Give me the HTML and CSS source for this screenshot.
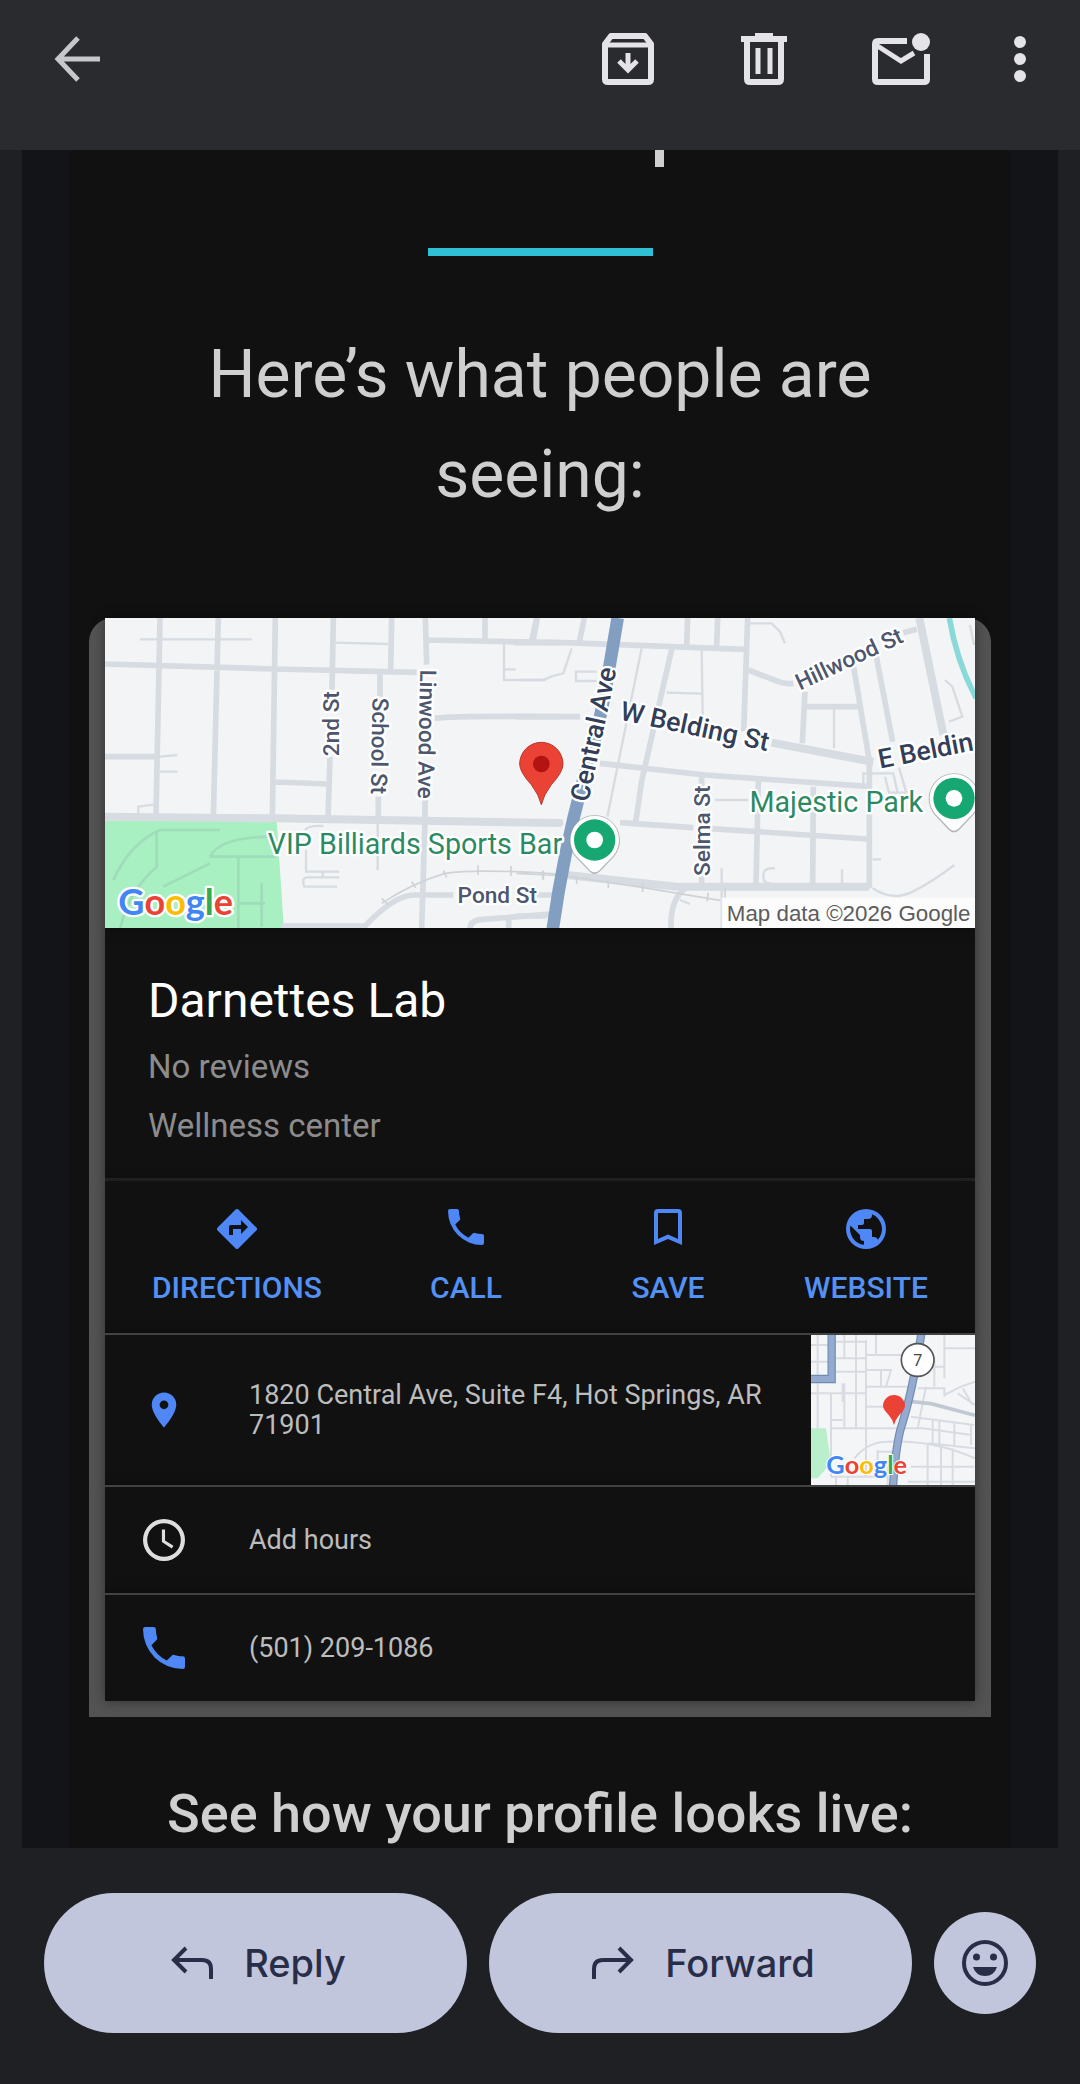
FILE: index.html
```html
<!DOCTYPE html>
<html lang="en">
<head>
  <meta charset="UTF-8" />
  <meta name="viewport" content="width=device-width, initial-scale=1.0" />
  <title>Darnettes Lab</title>
  <link rel="stylesheet" href="styles.css">
</head>
<body>
  <header class="toolbar">
    <button class="icon-btn back" aria-label="Back">
      <svg width="46" height="46" viewBox="0 0 46 46" fill="none" stroke="#c6c7cb" stroke-width="5"><path d="M24 2L4 23l20 21M4 23h42" /></svg>
    </button>
    <button class="icon-btn archive" aria-label="Archive">
      <svg width="52" height="52" viewBox="0 0 52 52" fill="none" stroke="#e3e3e8" stroke-width="5"><path d="M3 11l6-8h34l6 8v35q0 3-3 3H6q-3 0-3-3z" stroke-linejoin="round" stroke-width="6" /><path d="M3 12h46" /><path d="M26 20v16M17 28l9 9 9-9" /></svg>
    </button>
    <button class="icon-btn trash" aria-label="Delete">
      <svg width="46" height="52" viewBox="0 0 46 52" fill="none" stroke="#e3e3e8" stroke-width="6"><path d="M0 6h46M14 3h18" /><path d="M6 6v40q0 3 3 3h28q3 0 3-3V6" /><path d="M17 15v26M29 15v26" stroke-width="5" /></svg>
    </button>
    <button class="icon-btn unread" aria-label="Mark as unread">
      <svg width="58" height="52" viewBox="0 0 58 52" fill="none" stroke="#e3e3e8" stroke-width="5"><path d="M35 8H6Q3 8 3 11v35q0 3 3 3h46q3 0 3-3V21" stroke-width="6" /><path d="M4 12l25 16 13-8" /><circle cx="49" cy="9" r="9" fill="#e3e3e8" stroke="none" /></svg>
    </button>
    <button class="icon-btn" aria-label="More options">
      <svg width="12" height="46" viewBox="0 0 12 46" fill="#e3e3e8"><circle cx="6" cy="6" r="6" /><circle cx="6" cy="23" r="6" /><circle cx="6" cy="40" r="6" /></svg>
    </button>
  </header>

  <main class="message">
    <div class="content">
      <div class="cut-line"></div>
      <hr class="accent">
      <h1>Here’s what people are seeing:</h1>

      <section class="card">
        <svg class="map" viewBox="0 0 2610 930" role="img" aria-label="Map of Central Ave">
          <rect width="2610" height="930" fill="#f3f4f5" />
          <!-- west side -->
          <g transform="translate(-75 -54)">
            <path d="M75 662h515l22 330H75z" fill="#a8efc1" />
            <g class="path-line"><path d="M100 840q50-110 140-150h180M230 690v110q-90 80-110 190M390 770q30-60 190-60M390 770h200M250 860q80-40 140-70M475 770v215M475 910h80M545 850v130" /></g>
            <g class="minor"><path d="M180 118h335M240 470l52-5M240 515h52M175 640v-20l45-6M765 128l160 4M1272 130v110h125M1272 208h35M893 660v150M675 690q10-15 55-12M678 750v65h100M728 815v20M778 832h-95q-20 0-10 28h98" /></g>
            <g class="road"><path d="M240 54L228 645M415 54L400 650M586 54L577 655M760 54l-4 215M750 470l-6 185M935 54l-3 160M900 215v75M895 590v70M1036 54l4 140M1035 600v60l-10 325M75 192l510 15 425 10M75 470h160M585 546l160 6M1040 120l400 8M1215 54v70M1370 54l-15 70M1065 355q60-8 375-5M605 978h250q90-95 150-93h115M1170 985q0-25 40-27l230-18M1286 960v25" /></g>
            <path class="wide" d="M75 650l510 5 860 14" />
            <path class="rail" d="M905 910q90-60 190-90 100-15 350 3M905 895l20 20M995 845l12 18M1090 812l10 20M1194 795v30M1293 798v30M1388 812v24" />
          </g>
          <!-- east side -->
          <g transform="translate(1245 -54)">
            <g class="minor"><path d="M155 145l-25 75q-30 5-60 20H-10M230 215h-62v28h62M365 145L262 650M545 148l3 200M440 278l105 3M690 70h65l25 25 15 35M942 325v120M1030 550v-30h90l12 55M1095 530l12 48h52l-22-75M1275 240l22 20 30 90-40 15M1350 75l12 60M585 600h100M765 805q-38-3-35 25 0 20 22 20M966 808v46M1058 865q60 40 120 10t125-80M1058 778h25M605 805v180M480 900l30 12" /></g>
            <g class="road"><path d="M-20 128h155l540 20M52 54L38 128M193 54l-15 72M503 54l-3 80M593 54l-3 85M683 54l-12 340M455 148l-90 395-18 125M685 210l90 35q20 8 45 5M240 490l315 35 500 35M-10 350h190M855 275l-8 155M850 320h175M1000 195l50 300M1068 165l50 260M1150 98l40-10M1048 495v370M545 525v40M545 820v35M715 545l-7 310M880 560l-2 295M560 685l480 32M-10 668h140M300 668l220 15M495 865q-45 35-42 120M50 885h50M-10 948h90" /></g>
            <g class="wide"><path d="M755 428l305 58M1198 54l72 350M140 825l330 35h578" /></g>
            <path class="rail" d="M-10 820l150 8 230 35 230 38M70 812v28M170 832v20M265 840v24M368 850v26M565 878l-4 26M615 865v28" />
            <path d="M1288 54q22 130 80 240" fill="none" stroke="#8ad9d9" stroke-width="17" />
            <path class="highway" d="M293 54l-38 225q-20 110-65 260-60 220-92 450" />
          </g>
          <g class="street">
            <text transform="translate(702 317) rotate(-90)">2nd St</text>
            <text transform="translate(800 383) rotate(91)">School St</text>
            <text transform="translate(942 348) rotate(91)">Linwood Ave</text>
            <text x="1177" y="855">Pond St</text>
            <text transform="translate(1815 638) rotate(-90)">Selma St</text>
            <text transform="translate(2242 144) rotate(-25)">Hillwood St</text>
          </g>
          <g class="avenue">
            <text transform="translate(1492 354) rotate(-78)">Central Ave</text>
            <text transform="translate(1764 352) rotate(12)">W Belding St</text>
            <text transform="translate(2467 424) rotate(-11)">E Beldin</text>
          </g>
          <g class="place">
            <text x="930" y="708">VIP Billiards Sports Bar</text>
            <text x="2194" y="583">Majestic Park</text>
          </g>
          <g transform="translate(1309 438)">
            <path d="M0 122q-6-28-30-60-35-38-35-62a65 65 0 01130 0q0 24-35 62Q6 94 0 122z" fill="#ea4335" stroke="#b9352a" stroke-width="3" />
            <circle r="25" fill="#b31412" />
          </g>
          <g id="pin" transform="translate(1469 666)">
            <path d="M0 102q-10 0-22-14l-36-38a76 76 0 11116 0l-36 38Q10 102 0 102z" fill="#8b8f94" opacity=".6" />
            <path d="M0 97q-10 0-20-13l-36-37a73 73 0 11112 0l-36 37Q10 97 0 97z" fill="#fff" />
            <circle r="62" fill="#17a773" />
            <circle r="25" fill="#fff" />
          </g>
          <use href="#pin" x="1078" y="-125" />
          <rect x="1850" y="839" width="760" height="91" fill="#fff" opacity=".75" />
          <text class="credit" x="2231" y="909">Map data ©2026 Google</text>
          <text class="google" x="40" y="892"><tspan class="blue">G</tspan><tspan class="red">o</tspan><tspan class="yellow">o</tspan><tspan class="blue">g</tspan><tspan class="green">l</tspan><tspan class="red">e</tspan></text>
        </svg>

        <div class="summary">
          <h2>Darnettes Lab</h2>
          <p>No reviews</p>
          <p>Wellness center</p>
        </div>

        <nav class="actions">
          <a href="#">
            <svg viewBox="2 2 20 20"><path d="M21.7 11.3l-9-9a1 1 0 00-1.4 0l-9 9a1 1 0 000 1.4l9 9a1 1 0 001.4 0l9-9a1 1 0 000-1.4zM14 14.5V12h-4v3H8v-4a1 1 0 011-1h5V7.500l3.500 3.500z" /></svg>
            <span>DIRECTIONS</span>
          </a>
          <a href="#">
            <svg viewBox="2 3 20 20"><path d="M6.600 10.800a15.100 15.100 0 006.600 6.600l2.200-2.200a1 1 0 011-.25c1.100.37 2.300.57 3.600.57a1 1 0 011 1V20a1 1 0 01-1 1A17 17 0 013 4a1 1 0 011-1h3.500a1 1 0 011 1c0 1.250.2 2.450.57 3.570a1 1 0 01-.25 1.020z" /></svg>
            <span>CALL</span>
          </a>
          <a href="#">
            <svg viewBox="2 3 20 20"><path d="M17 3H7a2 2 0 00-2 2v16l7-3 7 3V5a2 2 0 00-2-2zm0 15l-5-2.200L7 18V5h10z" /></svg>
            <span>SAVE</span>
          </a>
          <a href="#">
            <svg viewBox="2 2 20 20"><path d="M12 2a10 10 0 100 20 10 10 0 000-20zm-1 17.930A8 8 0 014.210 10.210L9 15v1a2 2 0 002 2zm6.900-2.540A2 2 0 0016 16h-1v-3a1 1 0 00-1-1H8v-2h2a1 1 0 001-1V7h2a2 2 0 002-2v-.41a8 8 0 012.900 12.800z" /></svg>
            <span>WEBSITE</span>
          </a>
        </nav>

        <div class="row address">
          <svg class="row-icon" viewBox="0 0 24 24"><path d="M12 2a7 7 0 00-7 7c0 5.250 7 13 7 13s7-7.750 7-13a7 7 0 00-7-7zm0 9.500a2.500 2.500 0 110-5 2.500 2.500 0 010 5z" /></svg>
          <p>1820 Central Ave, Suite F4, Hot Springs, AR 71901</p>
          <svg class="thumb" viewBox="0 0 492 450" role="img" aria-label="Area map">
            <rect width="492" height="450" fill="#f4f5f7" />
            <path d="M0 280h45l15 105-40 45H0z" fill="#b9efcb" />
            <g class="thumb-road">
              <path d="M20 0v280M100 0v70M100 145v135M135 0v280M165 15v260M0 30h70M70 20h95M0 80h50M70 70h95M70 110h95M0 175h165M60 175v250M165 100v325M60 255h35M95 145v55M195 0v60M165 60h110M165 105h75l-15 50M210 105v50M165 155h145M165 215h60M60 280h280M400 0v130M370 65v90M340 95h60M400 40h92M320 160h80v25M345 155l-25 125M400 180l50-25 42-15M440 175l52 35M455 160l30 50M300 245l190 25M335 280l147 20M385 255v75M430 260v70M365 255v75M480 270v60M350 325l142 15M130 370q40-50 100-50 140-5 262 50M300 395h190M350 330v120M390 335v115M425 340v110M290 440h202M60 425h170M200 345v40h45v-35h-45M75 425v25M110 425v25M230 395v55" />
              <path class="heavy" d="M285 198l75 8 132 35" />
            </g>
            <g fill="none" stroke="#6f8bb3" stroke-width="25"><path d="M62 0v132H0" /><path d="M331-4Q305 170 268 285q-15 60-22 170" /></g>
            <g fill="none" stroke="#94abcf" stroke-width="18"><path d="M62 0v132H0" /><path d="M331-4Q305 170 268 285q-15 60-22 170" /></g>
            <circle cx="320" cy="75" r="49" fill="#fff" stroke="#555" stroke-width="5" />
            <text class="route" x="320" y="92">7</text>
            <path d="M249 270q-3-15-16-30-17-18-17-27a33 33 0 0166 0q0 9-17 27-13 15-16 30z" fill="#ea4335" />
            <text class="google small" x="46" y="416"><tspan class="blue">G</tspan><tspan class="red">o</tspan><tspan class="yellow">o</tspan><tspan class="blue">g</tspan><tspan class="green">l</tspan><tspan class="red">e</tspan></text>
          </svg>
        </div>
        <div class="row">
          <svg class="row-icon light" viewBox="2 2 20 20"><path d="M12 2a10 10 0 100 20 10 10 0 000-20zm0 18a8 8 0 110-16 8 8 0 010 16z" /><path d="M12.500 7H11v6l4.700 3 .8-1.300-4-2.500z" /></svg>
          <p>Add hours</p>
        </div>
        <div class="row">
          <svg class="row-icon" viewBox="3 3 18 18"><path d="M6.600 10.800a15.100 15.100 0 006.600 6.600l2.200-2.200a1 1 0 011-.25c1.100.37 2.300.57 3.600.57a1 1 0 011 1V20a1 1 0 01-1 1A17 17 0 013 4a1 1 0 011-1h3.500a1 1 0 011 1c0 1.250.2 2.450.57 3.570a1 1 0 01-.25 1.020z" /></svg>
          <p>(501) 209-1086</p>
        </div>
      </section>

      <h3>See how your profile looks live:</h3>
    </div>
  </main>

  <footer class="reply-bar">
    <button class="pill">
      <svg width="42" height="34" viewBox="0 0 42 34" fill="none" stroke="#292e48" stroke-width="4"><path d="M15 2L3 14l12 12M3 14h28q9 0 9 9v10" /></svg>
      Reply
    </button>
    <button class="pill">
      <svg width="42" height="34" viewBox="0 0 42 34" fill="none" stroke="#292e48" stroke-width="4"><path d="M27 2l12 12-12 12M39 14H11q-9 0-9 9v10" /></svg>
      Forward
    </button>
    <button class="emoji" aria-label="Add reaction">
      <svg width="48" height="48" viewBox="0 0 48 48" fill="#292e48"><circle cx="24" cy="24" r="21" fill="none" stroke="#292e48" stroke-width="4" /><circle cx="15.500" cy="18" r="3.500" /><circle cx="32.500" cy="18" r="3.500" /><path d="M12 28h24q-3 9-12 9t-12-9z" /></svg>
    </button>
  </footer>
</body>
</html>
```
FILE: styles.css
```css
* { box-sizing: border-box; }
body {
  margin: 0; min-height: 100vh; display: flex; flex-direction: column;
  background: #1e2024; color: #cfcfcf; font-family: Roboto, Arial, sans-serif;
}
h1, h2, h3, p { margin: 0; font-weight: 400; }
button { border: none; padding: 0; font-family: inherit; cursor: pointer; }
svg { display: block; flex-shrink: 0; }

.toolbar {
  display: flex; align-items: center; height: 150px;
  padding: 0 54px 32px; background: #2a2b2f;
}
.icon-btn { background: none; }
.back { margin-right: auto; }
.archive { margin-right: 87px; }
.trash { margin-right: 85px; }
.unread { margin-right: 84px; }

.message { margin: 0 22px; padding: 0 48px; background: #121418; }
.content { padding: 0 19px; background: #111; overflow: hidden; }
.cut-line { width: 9px; height: 17px; margin: 0 auto; transform: translateX(119px); background: #cfcfcf; }
.accent { width: 225px; height: 8px; margin: 81px auto 0; border: none; background: #2fc0d5; }
h1 {
  max-width: 720px; margin: 69px auto 0; text-align: center;
  font-size: 66px; line-height: 100px;
}
h3 {
  margin: 63px 0 0; text-align: center;
  font-size: 54px; font-weight: 500; line-height: 68px;
}

.card {
  margin-top: 93px; padding: 0 16px 16px;
  background: #535353; border-radius: 24px 24px 0 0;
}
.card > * { background: #111; box-shadow: 0 0 12px rgba(0, 0, 0, 0.4); }
.map { position: relative; width: 100%; height: auto; overflow: hidden; }
.summary {
  padding: 43px 43px 23px; border-bottom: 3px solid #262626;
}
.summary h2 { font-size: 48px; line-height: 60px; color: #fff; margin-bottom: 6px; }
.summary p { font-size: 33px; line-height: 59px; color: #8c8c8c; }

.actions {
  display: grid; grid-template-columns: 264fr 194fr 210fr 186fr;
  padding: 28px 16px 25px 0;
}
.actions a {
  display: flex; flex-direction: column; align-items: center; gap: 19px;
  color: #5491f5; font-size: 30px; font-weight: 500; line-height: 40px; text-decoration: none;
}
.actions svg { width: 40px; height: 40px; fill: #4f87f7; }

.row {
  display: flex; align-items: center; min-height: 108px;
  padding-left: 38px; border-top: 2px solid #424242;
}
.row-icon { width: 42px; height: 42px; fill: #4f87f7; }
.row-icon.light { fill: #dedede; }
.row p { flex: 1; margin-left: 64px; font-size: 27px; line-height: 30px; color: #bdbdbd; }
.address p { padding-right: 40px; }
.address .row-icon { height: 50px; }
.thumb { width: 164px; height: 150px; }

/* map drawing */
.road, .wide, .minor, .rail, .path-line, .thumb-road { fill: none; stroke: #d6dce1; }
.road { stroke-width: 17; }
.wide { stroke-width: 24; }
.minor { stroke-width: 7; }
.rail { stroke: #cfd3d7; stroke-width: 5; }
.path-line { stroke: #9fdcba; stroke-width: 8; }
.highway { fill: none; stroke: #829fc1; stroke-width: 38; }
.street, .avenue, .place, .google { stroke: #fff; stroke-width: 14; stroke-linejoin: round; paint-order: stroke; }
.street { fill: #4c566d; font-size: 68px; font-weight: 500; text-anchor: middle; }
.avenue { fill: #333e58; font-size: 80px; font-weight: 500; text-anchor: middle; }
.place { fill: #2c8a63; font-size: 86px; text-anchor: middle; }
.credit { fill: #5c5c5c; font-family: "Liberation Sans", Arial, sans-serif; font-size: 67px; text-anchor: middle; }
.google { font-family: Lato, sans-serif; font-size: 108px; font-weight: 700; }
.google.small { font-size: 76px; stroke-width: 6; }
.blue { fill: #4285f4; }
.red { fill: #ea4335; }
.yellow { fill: #fbbc04; }
.green { fill: #34a853; }
.thumb-road { stroke: #d8dce2; stroke-width: 6; }
.heavy { stroke: #c0c8d2; stroke-width: 11; }
.route { fill: #444; font-size: 48px; text-anchor: middle; }

.reply-bar {
  display: flex; align-items: center; gap: 22px;
  margin-top: auto; padding: 45px 44px 51px;
}
.pill {
  flex: 1; display: flex; align-items: center; justify-content: center; gap: 31px;
  height: 140px; padding-left: 6px; border-radius: 70px; background: #c2c6dd;
  color: #292e48; font-family: Inter, Roboto, sans-serif; font-size: 38px; font-weight: 500;
}
.emoji {
  display: flex; align-items: center; justify-content: center;
  width: 102px; height: 102px; border-radius: 50%; background: #c2c6dd;
}
```
